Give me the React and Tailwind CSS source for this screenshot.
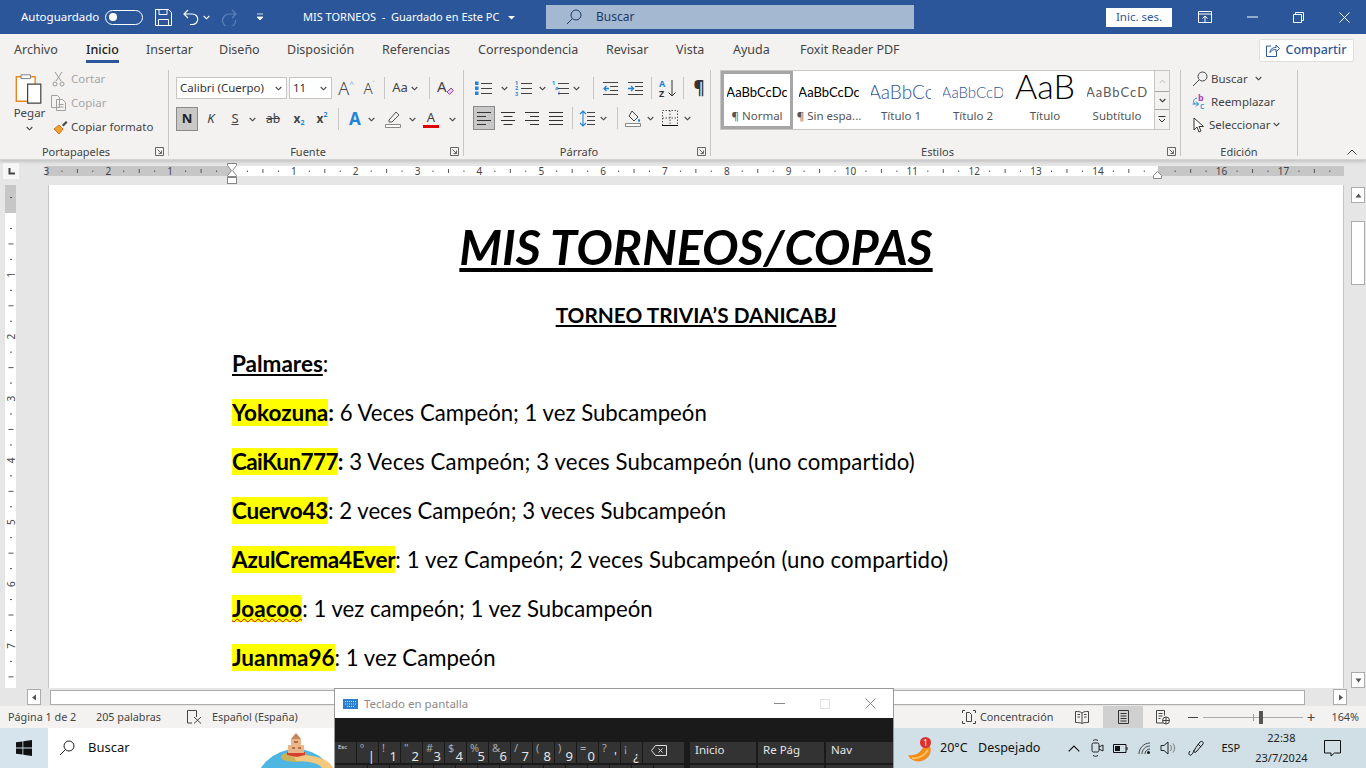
import React from 'react';

const tabs = [
  ['Archivo', 86, 14], ['Inicio', 60, 0], ['Insertar', 73, 0], ['Diseño', 68, 0], ['Disposición', 95, 0],
  ['Referencias', 96, 0], ['Correspondencia', 128, 0], ['Revisar', 70, 0], ['Vista', 57, 0], ['Ayuda', 67, 0], ['Foxit Reader PDF', 130, 0],
];

const styleItems = [
  { sample: 'AaBbCcDc', label: '¶ Normal', cls: "text-[13px] text-black font-['Lato']", selected: true },
  { sample: 'AaBbCcDc', label: '¶ Sin espa...', cls: "text-[13px] text-black font-['Lato']" },
  { sample: 'AaBbCc', label: 'Título 1', cls: "text-[19px] text-[#2f5496] font-['Lato'] font-light" },
  { sample: 'AaBbCcD', label: 'Título 2', cls: "text-[15px] text-[#2f5496] font-['Lato'] font-light" },
  { sample: 'AaB', label: 'Título', cls: "text-[34px] text-black font-['Lato'] font-light pb-[15px]" },
  { sample: 'AaBbCcD', label: 'Subtítulo', cls: "text-[13px] text-[#5a5a5a] font-['Lato'] tracking-[1px]" },
];

const palmares = [
  { name: 'Yokozuna', boldColon: true, rest: ' 6 Veces Campeón; 1 vez Subcampeón', cls: '', restCls: '' },
  { name: 'CaiKun777', boldColon: true, rest: ' 3 Veces Campeón; 3 veces Subcampeón (uno compartido)', cls: 'tracking-[-0.6px]', restCls: 'tracking-[0.12px]' },
  { name: 'Cuervo43', boldColon: false, rest: ' 2 veces Campeón; 3 veces Subcampeón', cls: 'tracking-[-0.3px]', restCls: '' },
  { name: 'AzulCrema4Ever', boldColon: false, rest: ' 1 vez Campeón; 2 veces Subcampeón (uno compartido)', cls: 'tracking-[-0.25px]', restCls: 'tracking-[0.12px]' },
  { name: 'Joacoo', boldColon: false, rest: ' 1 vez campeón; 1 vez Subcampeón', cls: 'underline decoration-wavy decoration-[#d00000] decoration-1', restCls: '' },
  { name: 'Juanma96', boldColon: false, rest: ' 1 vez Campeón', cls: '', restCls: '' },
];

const keys = [
  ['º', '|'], ['!', '1'], ['"', '2'], ['#', '3'], ['$', '4'], ['%', '5'], ['&', '6'],
  ['/', '7'], ['(', '8'], [')', '9'], ['=', '0'], ['?', "'"], ['¡', '¿'],
];

const Chev = ({ c = '#444', className = '' }) => (
  <svg width="7" height="5" viewBox="0 0 7 5" className={className}><path d="M.7 1 3.5 3.8 6.3 1" fill="none" stroke={c} strokeWidth="1.1" /></svg>
);

const Launcher = () => (
  <svg width="9" height="9" viewBox="0 0 9 9"><path d="M.5 8.5V.5h8v8zM2.5 2.5l4 4M6.5 3.5v3h-3" fill="none" stroke="#666" strokeWidth="1" /></svg>
);

const Sep = ({ h = 'h-[22px]' }) => <div className={`w-px bg-[#c6c6c6] ${h}`} />;

const Lines = ({ w = 16, align = 'left' }) => {
  const rows = [2, 6, 10, 14];
  const len = (i) => (align === 'just' ? w : i % 2 ? w - 5 : w);
  const x1 = (i) => (align === 'center' ? (w - len(i)) / 2 : align === 'right' ? w - len(i) : 0);
  return (
    <svg width={w} height="16" viewBox={`0 0 ${w} 16`}>
      {rows.map((y, i) => <path key={y} d={`M${x1(i)} ${y + 0.5}h${len(i)}`} stroke="#333" />)}
    </svg>
  );
};

const Bullets = ({ kind }) => (
  <svg width="17" height="17" viewBox="0 0 17 17">
    {[3, 8, 13].map((y) => <path key={y} d={`M6 ${y + 0.5}h11`} stroke="#444" />)}
    {kind === 'dot' && [3, 8, 13].map((y) => <rect key={y} x="0" y={y - 1.5} width="3.5" height="3.5" fill="#1f85d6" />)}
    {kind === 'num' && [1, 2, 3].map((n) => <text key={n} x="0" y={n * 5.2} fontSize="5.5" fontWeight="700" fill="#1f85d6">{n}</text>)}
    {kind === 'multi' && <><text x="0" y="5" fontSize="5.5" fontWeight="700" fill="#1f85d6">1</text><text x="3" y="10" fontSize="5.5" fontWeight="700" fill="#1f85d6">a</text><text x="6" y="15" fontSize="5.5" fontWeight="700" fill="#1f85d6">i</text></>}
  </svg>
);

const Indent = ({ flip }) => (
  <svg width="15" height="15" viewBox="0 0 15 15">
    <path d="M0 1.5h15M7 5.5h8M7 9.5h8M0 13.5h15" stroke="#444" />
    <path d={flip ? 'M0 7.5h5M3 5l2.5 2.5L3 10' : 'M1 7.5h5M3.5 5 1 7.5 3.500 10'} fill="none" stroke="#1f85d6" strokeWidth="1.3" />
  </svg>
);

const Slot = ({ w, children, className = '' }) => (
  <div className={`flex items-center justify-center shrink-0 ${className}`} style={{ width: w }}>{children}</div>
);

const Group = ({ w, label, launcher = true, children }) => (
  <div className="relative shrink-0 border-r border-[#c6c6c6] my-[4px] flex flex-col" style={{ width: w, height: 86 }}>
    <div className="flex-1 min-h-0">{children}</div>
    <div className={`h-[16px] pt-[8px] flex items-center justify-center text-[11px] text-[#444] ${launcher ? 'pr-[16px]' : ''}`}>{label}</div>
    {launcher && <div className="absolute right-[4px] bottom-0 flex"><Launcher /></div>}
  </div>
);

const TitleBar = () => (
  <div className="h-[34px] bg-[#2b579a] flex items-center text-white text-[11.5px] shrink-0">
    <span className="ml-[21px] w-[84px]">Autoguardado</span>
    <div className="w-[38px] h-[15px] rounded-full border border-white flex items-center pl-[3px]">
      <div className="w-[8px] h-[8px] rounded-full bg-white" />
    </div>
    <svg className="ml-[12px]" width="17" height="17" viewBox="0 0 17 17"><path d="M.5.5h13l3 3v13H.5zM4 .5v5h8v-5M3.500 16.500v-6h10v6" fill="none" stroke="#fff" /></svg>
    <svg className="ml-[11px]" width="16" height="17" viewBox="0 0 16 17"><path d="M5 1 1 5l4 4M1.500 5h8a5.200 5.200 0 0 1 0 10.500H7" fill="none" stroke="#fff" strokeWidth="1.200" /></svg>
    <Chev c="#fff" className="ml-[4px]" />
    <svg className="ml-[11px]" width="16" height="17" viewBox="0 0 16 17"><path d="M11 1l4 4-4 4M14.500 5H8a6.500 6.500 0 1 0 6.500 6" fill="none" stroke="#5c82b8" strokeWidth="1.200" /></svg>
    <svg className="ml-[19px]" width="8" height="8" viewBox="0 0 8 8"><path d="M1 1h6M1 4l3 3 3-3z" fill="#fff" stroke="#fff" strokeWidth="0.800" /></svg>
    <span className="ml-[39px] w-[205px] text-[11px] whitespace-pre">MIS TORNEOS  -  Guardado en Este PC</span>
    <svg width="7" height="5" viewBox="0 0 7 5"><path d="M0 1h7L3.500 4.500z" fill="#fff" /></svg>
    <div className="ml-[31px] w-[368px] h-[24px] bg-[#a5b8d2] flex items-center text-[#1d3a66] text-[12px]">
      <svg className="ml-[20px]" width="16" height="16" viewBox="0 0 16 16"><circle cx="10" cy="6" r="5" fill="none" stroke="#1d3a66" /><path d="M6.300 9.700 1 15" stroke="#1d3a66" /></svg>
      <span className="ml-[14px]">Buscar</span>
    </div>
    <div className="ml-[192px] w-[66px] h-[19px] bg-white text-[#2b579a] text-[11.5px] flex items-center justify-center">Inic. ses.</div>
    <svg className="ml-[26px]" width="14" height="12" viewBox="0 0 14 12"><path d="M.5.500h13v11H.5zM.5 3h13M7 11V5M4.500 7.500 7 5l2.500 2.500" fill="none" stroke="#fff" /></svg>
    <svg className="ml-[35px]" width="11" height="2" viewBox="0 0 11 2"><path d="M0 1h11" stroke="#fff" /></svg>
    <svg className="ml-[35px]" width="11" height="11" viewBox="0 0 11 11"><path d="M.5 2.500h8v8h-8zM2.500 2.500v-2h8v8h-2" fill="none" stroke="#fff" /></svg>
    <svg className="ml-[35px]" width="11" height="11" viewBox="0 0 11 11"><path d="m.5.500 10 10M10.500.500l-10 10" stroke="#fff" /></svg>
  </div>
);

const TabRow = () => (
  <div className="h-[32px] bg-[#f3f2f1] flex items-center text-[12.5px] text-[#444] shrink-0">
    {tabs.map(([name, w, pad]) => (
      <div key={name} className="relative h-full flex items-center shrink-0" style={{ width: w, paddingLeft: pad }}>
        <span className={name === 'Inicio' ? 'relative text-[#222] font-medium' : ''}>
          {name}
          {name === 'Inicio' && <span className="absolute left-0 right-0 top-[19px] h-[3px] bg-[#2b579a]" />}
        </span>
      </div>
    ))}
    <div className="flex-1" />
    <div className="mr-[12px] w-[95px] h-[23px] bg-white border border-[#e1dfdd] rounded-[2px] flex items-center justify-center gap-[5px] text-[#2b579a] text-[12.5px] font-medium">
      <svg width="14" height="14" viewBox="0 0 14 14"><path d="M5 3H.5v10.500h10V9M4 9.500c0-3.500 3-5 6-5V2l3.500 3.500L10 9V6.500C8 6.500 5.500 7 4 9.500z" fill="none" stroke="#2b579a" /></svg>
      Compartir
    </div>
  </div>
);

const Clipboard = () => (
  <Group w={169} label="Portapapeles">
    <div className="flex h-full">
      <div className="w-[52px] pl-[7px] flex flex-col items-center pt-[2px] text-[11.5px] text-[#444]">
        <svg width="29" height="32" viewBox="0 0 30 34">
          <path d="M1 5h20v26H1z" fill="#fff" stroke="#e8871e" strokeWidth="1.500" />
          <path d="M6 3h10v4H6z" fill="#fff" stroke="#777" />
          <path d="M13 13h14v20H13z" fill="#fff" stroke="#444" strokeWidth="1.300" />
        </svg>
        <span className="mt-[1px] leading-[16px]">Pegar</span>
        <Chev className="mt-[5px]" />
      </div>
      <div className="-mt-[3px] text-[11.5px] flex flex-col">
        <div className="h-[24px] flex items-center text-[#a6a6a6]">
          <svg className="mr-[6px]" width="13" height="16" viewBox="0 0 13 16"><path d="m3 1 6 9M10 1l-6 9" stroke="#999" /><circle cx="3" cy="13" r="2" fill="none" stroke="#999" /><circle cx="10" cy="13" r="2" fill="none" stroke="#999" /></svg>
          Cortar
        </div>
        <div className="h-[24px] flex items-center text-[#a6a6a6]">
          <svg className="mr-[4px] ml-[-1px]" width="16" height="16" viewBox="0 0 16 16"><path d="M.5.500h6l2 2v10h-8zM5.500 4.500h6l3 3v8h-9zM7.500 9.500h5M7.500 12h5" fill="none" stroke="#a0a0a0" /></svg>
          Copiar
        </div>
        <div className="h-[24px] flex items-center text-[#444] ml-[1px]">
          <svg className="mr-[3px]" width="15" height="15" viewBox="0 0 15 15"><path d="m6 5 4 4-4 5-5-5z" fill="#f0a13a" stroke="#d3731a" /><path d="m9 5 4-4 1.500 1.500-4 4z" fill="#444" /></svg>
          Copiar formato
        </div>
      </div>
    </div>
  </Group>
);

const FontGroup = () => (
  <Group w={295} label="Fuente">
    <div className="pl-[7px] pt-[7px]">
      <div className="flex items-center h-[22px]">
        <div className="w-[111px] h-[22px] bg-white border border-[#c6c6c6] flex items-center justify-between pl-[3px] pr-[4px] text-[11.5px] text-[#333]">Calibri (Cuerpo)<Chev /></div>
        <div className="ml-[2px] w-[43px] h-[22px] bg-white border border-[#c6c6c6] flex items-center justify-between pl-[3px] pr-[4px] text-[11.5px] text-[#333]">11<Chev /></div>
        <Slot w={26} className="ml-[1px] text-[18px] text-[#444] font-light">A<span className="text-[8px] mb-[8px] text-[#1f85d6]">^</span></Slot>
        <Slot w={20} className="text-[15px] text-[#444] font-light">A<span className="text-[7px] mb-[8px] text-[#1f85d6]">˅</span></Slot>
        <Slot w={9} className="ml-[1px]"><Sep /></Slot>
        <Slot w={32} className="text-[13px] text-[#444] gap-[3px]">Aa<Chev /></Slot>
        <Slot w={16}><Sep /></Slot>
        <Slot w={18}>
          <svg width="18" height="18" viewBox="0 0 18 18"><text x="0" y="13" fontSize="15" fill="#444">A</text><path d="m10 13 4-4 2.500 2.500-4 4z" fill="#e8c6ec" stroke="#9b45a8" /></svg>
        </Slot>
      </div>
      <div className="flex items-center h-[24px] mt-[8px] text-[#444]">
        <div className="w-[22px] h-[24px] bg-[#c8c8c8] border border-[#8a8a8a] flex items-center justify-center text-[13px] font-bold text-[#222]">N</div>
        <Slot w={24} className="ml-[1px] text-[13px] italic">K</Slot>
        <Slot w={24} className="text-[13px] underline">S</Slot>
        <Slot w={10}><Chev /></Slot>
        <Slot w={32} className="text-[12px] line-through">ab</Slot>
        <Slot w={20} className="text-[12px] font-bold">x<span className="text-[7px] text-[#1f85d6] mt-[8px]">2</span></Slot>
        <Slot w={26} className="text-[12px] font-bold">x<span className="text-[7px] text-[#1f85d6] mb-[8px]">2</span></Slot>
        <Slot w={6}><Sep /></Slot>
        <Slot w={22} className="ml-[3px] text-[17px] font-bold text-[#1f85d6]">A</Slot>
        <Slot w={11}><Chev /></Slot>
        <Slot w={30} className="ml-[1px]">
          <svg width="17" height="17" viewBox="0 0 17 17"><path d="m4 9 7-8 3 3-7 7H4z" fill="none" stroke="#555" /><path d="M.5 13.500h15v3H.5z" fill="#fff" stroke="#888" /></svg>
        </Slot>
        <Slot w={8}><Chev /></Slot>
        <Slot w={30}>
          <div className="flex flex-col items-center leading-[14px] text-[13px]">A<div className="w-[16px] h-[3px] bg-[#e00000] mt-[1px]" /></div>
        </Slot>
        <Slot w={12}><Chev /></Slot>
      </div>
    </div>
  </Group>
);

const ParagraphGroup = () => (
  <Group w={247} label="Párrafo">
    <div className="pl-[11px] pt-[8px]">
      <div className="flex items-center h-[20px]">
        <Bullets kind="dot" />
        <Slot w={22} className="ml-[1px]"><Chev /></Slot>
        <Bullets kind="num" />
        <Slot w={20}><Chev /></Slot>
        <Bullets kind="multi" />
        <Slot w={14}><Chev /></Slot>
        <Slot w={20}><Sep /></Slot>
        <Indent />
        <Slot w={10} />
        <Indent flip />
        <Slot w={16}><Sep /></Slot>
        <svg width="17" height="19" viewBox="0 0 17 19"><text x="0" y="8" fontSize="9" fontWeight="700" fill="#1f85d6">A</text><text x="0" y="17.500" fontSize="9" fontWeight="700" fill="#333">Z</text><path d="M13 1v16M9.500 13.500 13 17l3.500-3.500" fill="none" stroke="#333" /></svg>
        <Slot w={14}><Sep /></Slot>
        <Slot w={16} className="ml-[1px] text-[17px] font-bold text-[#333]">¶</Slot>
      </div>
      <div className="flex items-center h-[24px] mt-[8px] ml-[-2px]">
        <div className="w-[22px] h-[24px] bg-[#c8c8c8] border border-[#8a8a8a] flex items-center justify-center"><Lines w={14} /></div>
        <Slot w={24} className="ml-[1px]"><Lines w={14} align="center" /></Slot>
        <Slot w={24}><Lines w={14} align="right" /></Slot>
        <Slot w={24}><Lines w={14} align="just" /></Slot>
        <Slot w={9}><Sep /></Slot>
        <svg className="ml-[1px]" width="17" height="17" viewBox="0 0 17 17"><path d="M5 1v15M2 4l3-3 3 3M2 13l3 3 3-3" fill="none" stroke="#1f85d6" strokeWidth="1.100" /><path d="M9 2.500h8M9 6.500h8M9 10.500h8M9 14.500h8" stroke="#444" /></svg>
        <Slot w={16}><Chev /></Slot>
        <Slot w={13}><Sep /></Slot>
        <svg className="ml-[1px]" width="17" height="17" viewBox="0 0 17 17"><path d="m7 1 6 6-4 4-5-5z" fill="none" stroke="#444" /><path d="M14 8.500c1.500 2 1.500 3 0 3.500-1.500-.5-1.500-1.500 0-3.500z" fill="#1f85d6" /><path d="M.5 13.500h15v3H.5z" fill="#fff" stroke="#888" /></svg>
        <Slot w={17}><Chev /></Slot>
        <svg className="ml-[3px]" width="16" height="16" viewBox="0 0 16 16"><path d="M.5.500h15v15H.5zM8 .500v15M.5 8h15" fill="none" stroke="#555" strokeDasharray="1.500 1.500" /><path d="M0 15.500h16" stroke="#111" /></svg>
        <Slot w={18}><Chev /></Slot>
      </div>
    </div>
  </Group>
);

const StylesGroup = () => (
  <Group w={470} label="Estilos">
    <div className="pl-[9px]">
      <div className="w-[450px] h-[60px] bg-white border border-[#c6c6c6] flex">
        <div className="flex-1 flex">
          {styleItems.map((s) => (
            <div key={s.label} className={`w-[72px] h-full shrink-0 flex flex-col items-center overflow-hidden border-[3px] ${s.selected ? 'border-[#a6a6a6]' : 'border-transparent'}`}>
              <div className={`h-[34px] pt-[3px] flex items-center justify-center overflow-hidden whitespace-nowrap w-[60px] ${s.cls}`}><span className="shrink-0">{s.sample}</span></div>
              <span className="text-[11.5px] leading-[14px] mt-[1px] text-[#555] whitespace-nowrap">{s.label}</span>
            </div>
          ))}
        </div>
        <div className="w-[15px] shrink-0 flex flex-col border-l border-[#c6c6c6]">
          <div className="h-[20px] flex items-center justify-center bg-[#f3f2f1]"><svg width="7" height="5" viewBox="0 0 7 5"><path d="M.7 4 3.500 1.200 6.300 4" fill="none" stroke="#bbb" /></svg></div>
          <div className="h-[19px] flex items-center justify-center border-y border-[#a6a6a6] bg-[#f3f2f1]"><Chev c="#333" /></div>
          <div className="flex-1 flex items-center justify-center bg-[#f3f2f1]"><svg width="8" height="7" viewBox="0 0 8 7"><path d="M.5.500h7M1 3l3 3 3-3" fill="none" stroke="#333" /></svg></div>
        </div>
      </div>
    </div>
  </Group>
);

const EditGroup = () => (
  <Group w={117} label="Edición" launcher={false}>
    <div className="pl-[11px] -mt-[3px] text-[11.5px] text-[#444] flex flex-col">
      <div className="h-[23px] flex items-center">
        <svg className="mr-[3px]" width="16" height="16" viewBox="0 0 16 16"><circle cx="10.500" cy="5.500" r="4.500" fill="none" stroke="#444" /><path d="M7 9 1 15" stroke="#444" /></svg>
        Buscar<Chev className="ml-[7px]" />
      </div>
      <div className="h-[23px] flex items-center">
        <svg className="mr-[4px]" width="15" height="16" viewBox="0 0 15 16"><text x="6" y="7" fontSize="9" fontWeight="700" fill="#b03fb5">b</text><text x="8" y="15" fontSize="9" fill="#1f85d6">c</text><path d="M5 4C1.500 4.500.5 8 3 10M.5 10h6M4 7.500 6.500 10 4 12.500" fill="none" stroke="#1f85d6" /></svg>
        Reemplazar
      </div>
      <div className="h-[23px] flex items-center">
        <svg className="mr-[4px] ml-[1px]" width="12" height="16" viewBox="0 0 12 16"><path d="M1 1v12l3-3 2 5 2-1-2-4.500h4.500z" fill="#fff" stroke="#333" /></svg>
        Seleccionar<Chev className="ml-[2px]" />
      </div>
    </div>
  </Group>
);

const Ribbon = () => (
  <div className="relative h-[94px] bg-[#f3f2f1] flex items-start border-b border-[#d4d4d4] shadow-[0_2px_3px_rgba(0,0,0,0.15)] z-10 shrink-0">
    <Clipboard />
    <FontGroup />
    <ParagraphGroup />
    <StylesGroup />
    <EditGroup />
    <svg className="absolute right-[9px] bottom-[4px]" width="10" height="6" viewBox="0 0 10 6"><path d="M.5 5.500 5 1l4.500 4.500" fill="none" stroke="#444" /></svg>
  </div>
);

const CM = 61.85;
const ZERO = 232;

const HRuler = () => {
  const marks = [];
  for (let q = -12; q <= 71; q++) marks.push(q);
  return (
    <svg width="1344" height="25" viewBox="0 0 1344 25" className="absolute left-0 top-0">
      <rect x="46" y="6" width="1298" height="10" fill="#fff" />
      <rect x="46" y="6" width="186" height="10" fill="#c6c6c6" />
      <rect x="1158" y="6" width="186" height="10" fill="#c6c6c6" />
      {marks.map((q) => {
        const x = ZERO + (q * CM) / 4;
        if (q === 0 || q === 60) return null;
        if (q % 4 === 0) {
          return <text key={q} x={x} y="15" textAnchor="middle" fontSize="10" fill="#444" fontFamily="Noto Sans">{Math.abs(q / 4)}</text>;
        }
        if (q % 2 === 0) return <path key={q} d={`M${x} 9v4`} stroke="#555" />;
        return <path key={q} d={`M${x} 10.500v1.500`} stroke="#555" />;
      })}
      <path d="M227.500 3.500h9v2l-4 5 4 5v1l-4.500 0-4.500 0v-1l4-5-4-5z" fill="#fff" stroke="#888" />
      <rect x="227.500" y="17.500" width="9" height="6" fill="#fff" stroke="#888" />
      <path d="M1153.500 18.500v-3l4-4 4 4v3z" fill="#fff" stroke="#888" />
    </svg>
  );
};

const VRuler = () => {
  const marks = [];
  for (let q = -1; q <= 31; q++) marks.push(q);
  return (
    <svg width="48" height="503" viewBox="0 0 48 503">
      <rect x="5" y="0" width="11" height="503" fill="#fff" />
      <rect x="5" y="0" width="11" height="28" fill="#c6c6c6" />
      {marks.map((q) => {
        const y = 28 + (q * CM) / 4;
        if (q === 0) return null;
        if (q % 4 === 0) {
          return <text key={q} transform={`translate(15 ${y}) rotate(-90)`} textAnchor="middle" fontSize="10" fill="#444" fontFamily="Noto Sans">{q / 4}</text>;
        }
        if (q % 2 === 0) return <path key={q} d={`M8.500 ${y}h5`} stroke="#555" />;
        return <path key={q} d={`M10 ${y}h2`} stroke="#555" />;
      })}
    </svg>
  );
};

const Page = () => (
  <div className="w-[1296px] h-[503px] bg-white border-l border-r border-[#c6c6c6] overflow-hidden font-['Lato',sans-serif] text-black text-[22.2px] [font-variant-ligatures:none] shrink-0">
    <h1 className="mt-[35px] text-center font-bold italic underline text-[48.6px] leading-[52px]">MIS TORNEOS/COPAS</h1>
    <p className="mt-[18px] text-center font-bold underline leading-[49px] text-[20.8px]">TORNEO TRIVIA’S DANICABJ</p>
    <div className="pl-[183px] leading-[49px]">
      <p><span className="font-bold underline text-[22.5px]">Palmares</span>:</p>
      {palmares.map((row) => (
        <p key={row.name} className="whitespace-pre">
          <span className={`font-bold bg-[#ffff00] text-[22.5px] ${row.cls}`}>{row.name}</span>
          <span className={row.boldColon ? 'font-bold' : ''}>:</span>
          <span className={row.restCls}>{row.rest}</span>
        </p>
      ))}
    </div>
  </div>
);

const ScrollBtn = ({ dir }) => (
  <div className="w-[14px] h-[16px] bg-white border border-[#ababab] flex items-center justify-center shrink-0">
    <svg width="7" height="7" viewBox="0 0 7 7"><path d={dir === 'up' ? 'M.5 5.500h6L3.500 1.500z' : dir === 'down' ? 'M.5 1.500h6L3.500 5.500z' : dir === 'left' ? 'M5 .5v6L1 3.500z' : 'M2 .5v6L6 3.500z'} fill="#555" /></svg>
  </div>
);

const VScroll = () => (
  <div className="w-[22px] h-[503px] bg-[#e6e6e6] flex flex-col items-end pr-[1px] pt-[2px] shrink-0">
    <ScrollBtn dir="up" />
    <div className="mt-[18px] w-[14px] h-[64px] bg-white border border-[#ababab]" />
    <div className="flex-1" />
    <ScrollBtn dir="down" />
  </div>
);

const HScroll = () => (
  <div className="h-[18px] bg-[#e6e6e6] flex items-center shrink-0">
    <div className="ml-[27px]"><ScrollBtn dir="left" /></div>
    <div className="ml-[9px] w-[1255px] h-[15px] bg-white border border-[#ababab]" />
    <div className="ml-[28px]"><ScrollBtn dir="right" /></div>
  </div>
);

const StatusBar = () => (
  <div className="h-[22px] bg-[#f3f2f1] flex items-center text-[10.8px] text-[#444] shrink-0">
    <span className="ml-[8px] w-[88px]">Página 1 de 2</span>
    <span className="w-[91px]">205 palabras</span>
    <svg width="15" height="14" viewBox="0 0 15 14"><path d="M5 13H.5V.5h9V7M7 7l7 6.500M14 7l-7 6.500" fill="none" stroke="#444" /></svg>
    <span className="ml-[10px]">Español (España)</span>
    <div className="flex-1" />
    <svg width="14" height="14" viewBox="0 0 14 14"><path d="M.5 3V.5H3M11 .5h2.500V3M.5 11v2.500H3M11 13.500h2.500V11M4.500 2.500h3l2 2v7h-5z" fill="none" stroke="#444" /></svg>
    <span className="ml-[4px] w-[74px] whitespace-nowrap">Concentración</span>
    <div className="w-[50px] pl-[21px] flex items-center shrink-0">
      <svg width="14" height="13" viewBox="0 0 14 13"><path d="M7 2C5.500.500 3 .500.5.500v11c2.500 0 5 0 6.500 1 1.500-1 4-1 6.500-1V.5C11 .500 8.500.500 7 2zM7 2v10M2.500 3.500h2.500M2.500 6h2.500M9 3.500h2.500M9 6h2.500" fill="none" stroke="#444" /></svg>
    </div>
    <div className="ml-[-1px] w-[40px] h-full bg-[#d0d0d0] flex items-center justify-center">
      <svg width="11" height="14" viewBox="0 0 11 14"><path d="M.5.500h10v13H.5zM2.500 3.500h6M2.500 6h6M2.500 8.500h6M2.500 11h6" fill="none" stroke="#333" /></svg>
    </div>
    <Slot w={39}>
      <svg width="14" height="15" viewBox="0 0 14 15"><path d="M7 13H.5V.5h8v5M2.500 3.500h4M2.500 6h4M2.500 8.500h2" fill="none" stroke="#444" /><circle cx="10" cy="10.500" r="3.500" fill="none" stroke="#444" /><path d="M6.500 10.500h7M10 7v7" stroke="#444" /></svg>
    </Slot>
    <span className="ml-[6px] w-[10px] h-px bg-[#444]" />
    <div className="relative ml-[5px] w-[100px] h-px bg-[#aaa]">
      <span className="absolute left-[50px] top-[-3px] w-px h-[7px] bg-[#999]" />
      <span className="absolute left-[56px] top-[-6px] w-[4px] h-[13px] bg-[#555]" />
    </div>
    <span className="ml-[1px] text-[15px] leading-[15px] w-[14px] text-center">+</span>
    <span className="ml-[11px] mr-[7px] w-[30px] text-right">164%</span>
  </div>
);

const Taskbar = () => (
  <div className="h-[40px] bg-gradient-to-r from-[#d5e4ed] via-[#d2e0e7] to-[#d0dee6] flex items-center text-[#111] shrink-0">
    <div className="w-[48px] flex justify-center">
      <svg width="16" height="16" viewBox="0 0 16 16"><path d="M0 2.300 6.500 1.400v6.200H0zM7.300 1.300 16 0v7.600H7.300zM0 8.400h6.500v6.200L0 13.700zM7.300 8.400H16V16l-8.700-1.300z" fill="#111" /></svg>
    </div>
    <div className="relative w-[290px] h-full bg-white flex items-center overflow-hidden">
      <svg className="ml-[11px]" width="16" height="16" viewBox="0 0 16 16"><circle cx="10" cy="6" r="5" fill="none" stroke="#222" /><path d="M6.300 9.700 1 15" stroke="#222" /></svg>
      <span className="ml-[13px] text-[13px]">Buscar</span>
      <svg className="absolute left-[206px] top-0" width="84" height="40" viewBox="0 0 84 40">
        <circle cx="42" cy="63" r="42" fill="#4eb6e0" />
        <ellipse cx="41" cy="29" rx="14" ry="5" fill="#c9b25a" />
        <path d="M40 28c12-2 26 0 34 6 3 2 4 4 5 6H68c-3-5-14-7-26-7z" fill="#f2c77e" />
        <path d="M33 27v-3h18v3l-8 2z" fill="#d8402e" />
        <path d="M34 25V17h3v-6h10v6h3v8z" fill="#e9b68a" />
        <path d="M37 11l5-6 5 6z" fill="#c9835a" />
        <path d="M40 14h4M38 20h3M44 20h3" stroke="#a05a33" strokeWidth="1.500" />
      </svg>
    </div>
    <div className="w-[26px] h-[26px] relative shrink-0 ml-[570px]">
      <svg width="24" height="18" viewBox="0 0 24 18" className="absolute left-0 top-[9px]"><path d="M0 11c6 1 11-1 14-6 1-2 3-4 7-5 3 5 2 11-2 14-3 3-8 4-12 3-3-1-6-3-7-6z" fill="#f28c1e" /><path d="M4 14c7 1 12-2 16-8" stroke="#f9c35a" strokeWidth="2" fill="none" /></svg>
      <span className="absolute left-[12px] top-[2px] w-[11px] h-[11px] rounded-full bg-[#d92f2f] text-white text-[8px] leading-[11px] text-center">1</span>
    </div>
    <span className="ml-[6px] text-[12.5px] w-[38px]">20°C</span>
    <span className="text-[12.5px]">Despejado</span>
    <svg className="ml-[28px]" width="12" height="7" viewBox="0 0 12 7"><path d="M.7 6.300 6 1l5.300 5.300" fill="none" stroke="#111" strokeWidth="1.200" /></svg>
    <svg className="ml-[11px]" width="13" height="18" viewBox="0 0 13 18"><rect x="1" y="4" width="7" height="9" rx="1.500" fill="none" stroke="#222" /><path d="m8 8 4-2v6l-4-2M2 1.500c2-1 3-1 5 0M2 16.500c2 1 3 1 5 0" fill="none" stroke="#222" /></svg>
    <svg className="ml-[9px]" width="15" height="9" viewBox="0 0 15 9"><path d="M.5.500h12.500v8H.5zM14 3v3" fill="none" stroke="#111" /><path d="M2 2h5v5H2z" fill="#111" /></svg>
    <svg className="ml-[10px]" width="13" height="13" viewBox="0 0 13 13"><path d="M1 12C1 6 6 1 12 1M4 12c0-4.500 3.500-8 8-8M7 12c0-2.800 2.200-5 5-5" fill="none" stroke="#444" /><circle cx="10.500" cy="10.500" r="1.500" fill="#111" /></svg>
    <svg className="ml-[9px]" width="16" height="14" viewBox="0 0 16 14"><path d="M1 4.500h3L8 1v12L4 9.500H1z" fill="none" stroke="#222" /><path d="M10.500 4c1.200 1.800 1.200 4.200 0 6M13 2.500c2 2.800 2 6.200 0 9" fill="none" stroke="#777" /></svg>
    <svg className="ml-[12px]" width="17" height="18" viewBox="0 0 17 18"><path d="M2 12c-2 2-1 5 1 4s3-5 6-9l3-4c1.500-1.500 4 0 3 2L8 13c-1 1-3 0-2-2M10 5l3 3" fill="none" stroke="#111" /></svg>
    <span className="ml-[16px] text-[11px] w-[30px]">ESP</span>
    <div className="w-[60px] flex flex-col items-center text-[11px] leading-[20px] text-[#222]">
      <span>22:38</span>
      <span className="whitespace-nowrap">23/7/2024</span>
    </div>
    <svg className="ml-[13px]" width="17" height="17" viewBox="0 0 17 17"><path d="M.5.500h16v12.500h-6L7 16v-3H.5z" fill="none" stroke="#111" /></svg>
  </div>
);

const OnScreenKeyboard = () => (
  <div className="absolute left-[334px] top-[688px] w-[560px] h-[80px] bg-[#1a1a1a] overflow-hidden border-l border-r border-t border-[#9a9a9a] z-20">
    <div className="h-[29px] bg-white flex items-center text-[11.5px] text-[#8a8a8a]">
      <svg className="ml-[8px]" width="15" height="10" viewBox="0 0 15 10"><rect width="15" height="10" fill="#2b7cd3" /><path d="M2 2.500h11M2 5h11M4 7.500h7" stroke="#cfe3f8" strokeDasharray="1 1" /></svg>
      <span className="ml-[6px]">Teclado en pantalla</span>
      <div className="flex-1" />
      <span className="w-[11px] h-px bg-[#888]" />
      <span className="ml-[35px] w-[10px] h-[10px] border border-[#e1e1e1]" />
      <svg className="ml-[35px] mr-[17px]" width="11" height="11" viewBox="0 0 11 11"><path d="m.5.500 10 10M10.500.500l-10 10" stroke="#888" /></svg>
    </div>
    <div className="pt-[24px]">
      <div className="flex text-[#e5e5e5] h-[21px]">
        <div className="w-[21px] h-[21px] bg-[#333] text-[6px] pl-[3px] pt-[1px] shrink-0">Esc</div>
        {keys.map(([top, main]) => (
          <div key={main} className="relative ml-px w-[21px] h-[21px] bg-[#333] shrink-0">
            <span className="absolute left-[3px] top-[0px] text-[11px] leading-[12px] text-[#aaa]">{top}</span>
            <span className="absolute right-[3px] bottom-[-1px] text-[13px] leading-[15px]">{main}</span>
          </div>
        ))}
        <div className="ml-px w-[41px] h-[21px] bg-[#333] flex pl-[8px] pt-[3px] shrink-0">
          <svg width="16" height="11" viewBox="0 0 16 11"><path d="M4.500.500h11v10h-11L.5 5.500zM7.500 3.500l4 4M11.500 3.500l-4 4" fill="none" stroke="#ddd" /></svg>
        </div>
        <div className="ml-[6px] w-[66px] h-[21px] bg-[#333] text-[11.5px] pl-[5px] leading-[16px] shrink-0">Inicio</div>
        <div className="ml-[2px] w-[66px] h-[21px] bg-[#333] text-[11.5px] pl-[5px] leading-[16px] shrink-0">Re Pág</div>
        <div className="ml-[2px] w-[68px] h-[21px] bg-[#333] text-[11.5px] pl-[5px] leading-[16px] shrink-0">Nav</div>
      </div>
      <div className="flex mt-[2px] h-[4px]">
        <div className="w-[32px] bg-[#333] shrink-0" />
        {keys.map(([top, main]) => <div key={main} className="ml-px w-[21px] bg-[#333] shrink-0" />)}
        <div className="ml-px w-[30px] bg-[#333] shrink-0" />
        <div className="ml-[6px] w-[66px] bg-[#333] shrink-0" />
        <div className="ml-[2px] w-[66px] bg-[#333] shrink-0" />
        <div className="ml-[2px] w-[68px] bg-[#333] shrink-0" />
      </div>
    </div>
  </div>
);

export default function App() {
  return (
    <div className="relative w-[1366px] h-[768px] overflow-hidden flex flex-col font-['Noto_Sans',sans-serif] bg-[#e6e6e6]">
      <TitleBar />
      <TabRow />
      <Ribbon />
      <div className="relative h-[25px] bg-[#e6e6e6] shrink-0">
        <div className="absolute left-[3px] top-[3px] w-[16px] h-[16px] bg-[#f7f7f7] flex items-center justify-center">
          <svg width="7" height="7" viewBox="0 0 7 7"><path d="M1.500 0v5.500H7" fill="none" stroke="#444" strokeWidth="2" /></svg>
        </div>
        <HRuler />
      </div>
      <div className="flex h-[503px] shrink-0">
        <VRuler />
        <Page />
        <VScroll />
      </div>
      <HScroll />
      <StatusBar />
      <Taskbar />
      <OnScreenKeyboard />
    </div>
  );
}
